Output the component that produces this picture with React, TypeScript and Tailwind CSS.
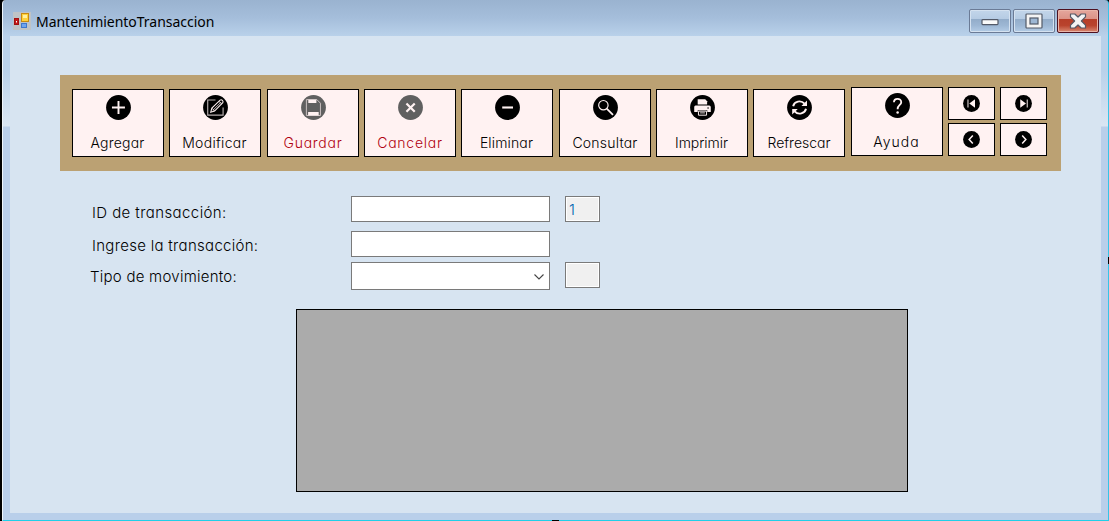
import type { ReactNode } from "react";

const PINK = "#fff2f2";

function Disc({ size = 25, fill = "#000", children }: { size?: number; fill?: string; children: ReactNode }) {
  return (
    <svg width={size} height={size} viewBox="0 0 26 26" className="block shrink-0">
      <circle cx="13" cy="13" r="12.9" fill={fill} />
      {children}
    </svg>
  );
}

const icons = {
  add: (
    <Disc>
      <path d="M6.2 13h13.500M13 6.300v13.500" stroke={PINK} strokeWidth="2" fill="none" />
    </Disc>
  ),
  edit: (
    <Disc>
      <path d="M13 5.200H4.900V21H20.900V13" stroke="#b5adad" strokeWidth="1.200" fill="none" />
      <path d="M8 18l1.2-4.4L17.8 5.3q1.3-.8 2.4.3t.4 2.4L12 16.7z" fill="#000" stroke={PINK} strokeWidth="1.1" />
      <path d="M10.4 15.8L18.8 7.4M9.2 13.6l2.8 3.1M16.6 6.6l2.8 2.7" stroke={PINK} strokeWidth=".8" />
    </Disc>
  ),
  save: (
    <Disc fill="#606060">
      <path d="M5.6 4.800H16.500L20.200 8.500V21.300H5.600z" fill="none" stroke="#cfc6c6" strokeWidth="1" />
      <path d="M7.600 4.900h8.400v3.400H7.600zM7.400 17.600h11v3.600h-11z" fill={PINK} />
    </Disc>
  ),
  cancel: (
    <Disc fill="#606060">
      <path d="M8.800 8.800l8.600 8.600M17.400 8.800L8.800 17.400" stroke={PINK} strokeWidth="2.3" />
    </Disc>
  ),
  remove: (
    <Disc>
      <path d="M7.500 13h11.200" stroke={PINK} strokeWidth="2.200" />
    </Disc>
  ),
  search: (
    <Disc>
      <circle cx="10.8" cy="10.6" r="4.9" fill="none" stroke={PINK} strokeWidth="1.2" />
      <path d="M14.3 14.1l6.500 6.600" stroke={PINK} strokeWidth="1.8" />
    </Disc>
  ),
  print: (
    <Disc>
      <path d="M8 4.4h7.800l2 2V10H8z" fill={PINK} />
      <path d="M5.8 10.800H20q1.6 0 1.6 1.600v5.400H18v-2H8v2H4.400v-5.400Q4.400 10.800 5.800 10.800z" fill={PINK} />
      <path d="M8.800 16.800h8.400v4.200H8.800z" fill="#000" stroke={PINK} strokeWidth="1" />
      <path d="M10.500 18.600h5" stroke={PINK} strokeWidth=".9" />
      <circle cx="18.800" cy="13.600" r=".8" fill="#000" />
    </Disc>
  ),
  refresh: (
    <Disc>
      <path d="M6.4 11.6C7.6 6.6 14.4 4.8 18.2 9M19.8 14.4C18.6 19.4 11.8 21.2 8 17" fill="none" stroke={PINK} strokeWidth="2" />
      <path d="M20.8 5.8v5.6h-5.8zM5.4 20.2v-5.6h5.8z" fill={PINK} />
    </Disc>
  ),
  help: (
    <Disc>
      <path d="M9.3 9.6C9.3 4.9 16.9 4.9 16.9 9.5C16.9 12.5 13.1 12.3 13.1 16.8" fill="none" stroke={PINK} strokeWidth="1.9" />
      <circle cx="13.1" cy="20.3" r="1.3" fill={PINK} />
    </Disc>
  ),
  first: (
    <Disc size={17}>
      <path d="M7.6 6.8v12.4" stroke="#b8b0b0" strokeWidth="2" />
      <path d="M18.4 6.6v12.8L9.6 13z" fill={PINK} />
    </Disc>
  ),
  last: (
    <Disc size={17}>
      <path d="M18.8 6.8v12.4" stroke="#b8b0b0" strokeWidth="2" />
      <path d="M8 6.6v12.8l8.8-6.4z" fill={PINK} />
    </Disc>
  ),
  prev: (
    <Disc size={17}>
      <path d="M15 7L9.400 13l5.600 6" fill="none" stroke={PINK} strokeWidth="2.300" />
    </Disc>
  ),
  next: (
    <Disc size={17}>
      <path d="M11 7l5.600 6-5.600 6" fill="none" stroke={PINK} strokeWidth="2.300" />
    </Disc>
  ),
};

const gothic = "font-['Inter',sans-serif] font-light [font-feature-settings:'cv11','ss03'] whitespace-nowrap";

function ToolButton({
  icon,
  label,
  className = "",
  labelClass = "",
}: {
  icon: ReactNode;
  label: string;
  className?: string;
  labelClass?: string;
}) {
  return (
    <button className={`flex min-h-[68px] w-[92px] shrink-0 flex-col items-start border border-black bg-[#fff2f2] pt-[5px] ${className}`}>
      <span className="pl-[33px]">{icon}</span>
      <span className={`${gothic} mt-[13px] w-[90px] text-center text-[14px] leading-[20px] ${labelClass}`}>{label}</span>
    </button>
  );
}

function NavButton({ icon }: { icon: ReactNode }) {
  return (
    <button className="flex h-[33px] w-[47px] border border-black bg-[#fff2f2] pt-[7px] pl-[14px]">
      {icon}
    </button>
  );
}

function AppIcon() {
  return (
    <svg width="18" height="18" viewBox="0 0 18 18" className="block shrink-0">
      <rect width="18" height="18" fill="#bfc3c6" />
      <rect x="8.5" y="1.5" width="7" height="8" fill="#ffd13a" stroke="#c88a10" />
      <rect x="10" y="3" width="4" height="3" fill="#fff0a0" />
      <rect x="1.5" y="6.5" width="4" height="6" fill="#c41818" stroke="#a01010" />
      <rect x="3" y="9" width="1" height="1.5" fill="#fff" />
      <rect x="8.5" y="11.5" width="5" height="4" fill="#6fa4ee" stroke="#3f78cc" />
    </svg>
  );
}

function Caption() {
  const glass =
    "flex h-6 w-[42px] items-center justify-center rounded-[2px] border border-[#6b7b96] shadow-[inset_0_0_0_1px_#d5e2f0] bg-[linear-gradient(#c3d6ea_0%,#b5cbe3_42%,#93adca_43%,#9db7d4_70%,#b4cce6_100%)]";
  return (
    <div className="mt-[9px] mr-[9px] flex h-6 gap-[2px]">
      <div className={glass}>
        <svg width="18" height="8" viewBox="0 0 18 8" className="mt-[2px] -ml-px">
          <rect x="1" y="1.600" width="16" height="5" rx=".8" fill="#fafafa" stroke="#535a68" strokeWidth="1.200" />
        </svg>
      </div>
      <div className={glass}>
        <svg width="18" height="16" viewBox="0 0 18 16" className="-mt-px -ml-px">
          <rect x="1" y="1" width="16" height="14" rx=".8" fill="#f4f4f4" stroke="#535a68" strokeWidth="1.200" />
          <rect x="5" y="5" width="8" height="6" fill="#9db7d4" stroke="#535a68" strokeWidth="1.200" />
        </svg>
      </div>
      <div className="flex h-6 w-[42px] items-center justify-center rounded-[2px] border border-[#4d1020] bg-[linear-gradient(#e5a79d_0%,#db9286_42%,#b63e29_43%,#b9432d_70%,#d98972_100%)] shadow-[inset_0_0_0_1px_#eab5a9]">
        <svg width="18" height="16" viewBox="0 0 18 16" className="-mt-px -ml-px">
          <path d="M1.500 1h4.300L9 4 12.200 1h4.300v2.800L12.400 8l4.100 4.200V15h-4.300L9 12 5.800 15H1.500v-2.800L5.600 8 1.500 3.800z" fill="#f4f4f4" stroke="#555966" strokeWidth="1.200" strokeLinejoin="round" />
        </svg>
      </div>
    </div>
  );
}

export default function App() {
  return (
    <div className="relative flex h-[521px] w-[1109px] overflow-hidden bg-black pl-[2px]">
      <div className="flex w-[1107px] flex-col rounded-t-[4px] border-r border-b border-l border-r-[#35c4e8] border-b-[#20cfe8] border-l-[#eef5fb] bg-[linear-gradient(#9ab3d0_0px,#a5bedb_18px,#b9d1ea_36px,#b9d1ea_70px,#d9e6f3_126px,#b9cfea_127px)]">
        <header className="flex h-9 shrink-0 items-start">
          <div className="mt-3 ml-[10px]">
            <AppIcon />
          </div>
          <h1 className="mt-3 ml-[5px] flex-1 font-['Noto_Sans',sans-serif] text-[14px] leading-[20px] tracking-[-0.03px] text-black">
            MantenimientoTransaccion
          </h1>
          <Caption />
        </header>

        <main className="ml-[7px] h-[477px] w-[1091px] bg-[#d7e4f1] pt-[39px]">
          <div className="ml-[50px] flex h-24 w-[1001px] items-start bg-[#bba173] pt-3 pl-3">
            <div className="flex pt-[2px]">
              <ToolButton icon={icons.add} label="Agregar" labelClass="tracking-[0.2px] pr-px" />
              <ToolButton icon={icons.edit} label="Modificar" className="ml-[5px]" labelClass="tracking-[0.3px] pr-px" />
              <ToolButton icon={icons.save} label="Guardar" className="ml-[6px] text-[#b0000e]" labelClass="tracking-[0.75px]" />
              <ToolButton icon={icons.cancel} label="Cancelar" className="ml-[5px] text-[#b0000e]" labelClass="tracking-[0.75px]" />
              <ToolButton icon={icons.remove} label="Eliminar" className="ml-[5px]" labelClass="tracking-[0.15px] pr-px" />
              <ToolButton icon={icons.search} label="Consultar" className="ml-[6px]" labelClass="tracking-[0.2px]" />
              <ToolButton icon={icons.print} label="Imprimir" className="ml-[5px]" labelClass="tracking-[-0.05px] pr-px" />
              <ToolButton icon={icons.refresh} label="Refrescar" className="ml-[5px]" />
            </div>
            <div className="ml-[6px]">
              <ToolButton icon={icons.help} label="Ayuda" className="h-[69px]" labelClass="pt-px tracking-[1px] pr-px" />
            </div>
            <div className="ml-[5px] grid h-[69px] grid-cols-[47px_47px] gap-x-[5px] gap-y-[3px]">
              <NavButton icon={icons.first} />
              <NavButton icon={icons.last} />
              <NavButton icon={icons.prev} />
              <NavButton icon={icons.next} />
            </div>
          </div>

          <form className="mt-[25px] ml-[81px] flex flex-col text-[15px] leading-[20px] text-black">
            <div className="flex h-[35px] items-start">
              <label className={`${gothic} w-[260px] pt-[7px] pl-px tracking-[0.41px]`}>ID de transacción:</label>
              <div className="h-[26px] w-[199px] border border-[#7a7a7a] bg-white" />
              <div className={`${gothic} ml-[15px] h-[26px] w-[35px] border border-[#7a7a7a] bg-[#f0f0f0] pt-[3px] pl-[3px] text-[#0063b1] shadow-[inset_0_0_0_1px_#fff]`}>1</div>
            </div>
            <div className="flex h-[31px] items-start">
              <label className={`${gothic} w-[260px] pt-[5px] pl-px tracking-[0.3px]`}>Ingrese la transacción:</label>
              <div className="h-[26px] w-[199px] border border-[#7a7a7a] bg-white" />
            </div>
            <div className="flex items-start">
              <label className={`${gothic} -ml-px w-[261px] pt-[5px] tracking-[0.25px]`}>Tipo de movimiento:</label>
              <div className="flex h-7 w-[199px] items-center justify-end border border-[#7a7a7a] bg-white pr-[5px]">
                <svg width="10" height="6" viewBox="0 0 10 6" className="mt-px">
                  <path d="M.5.5L5 5 9.500.5" fill="none" stroke="#444" strokeWidth="1.100" />
                </svg>
              </div>
              <div className="ml-[15px] h-[26px] w-[35px] border border-[#7a7a7a] bg-[#f0f0f0] shadow-[inset_0_0_0_1px_#fff]" />
            </div>
          </form>

          <div className="mt-[19px] ml-[286px] h-[183px] w-[612px] border border-black bg-[#ababab]" />
        </main>
      </div>
      <div className="absolute top-[257px] right-0 h-[7px] w-px bg-black" />
      <div className="absolute bottom-0 left-[552px] h-px w-[7px] bg-black" />
    </div>
  );
}
